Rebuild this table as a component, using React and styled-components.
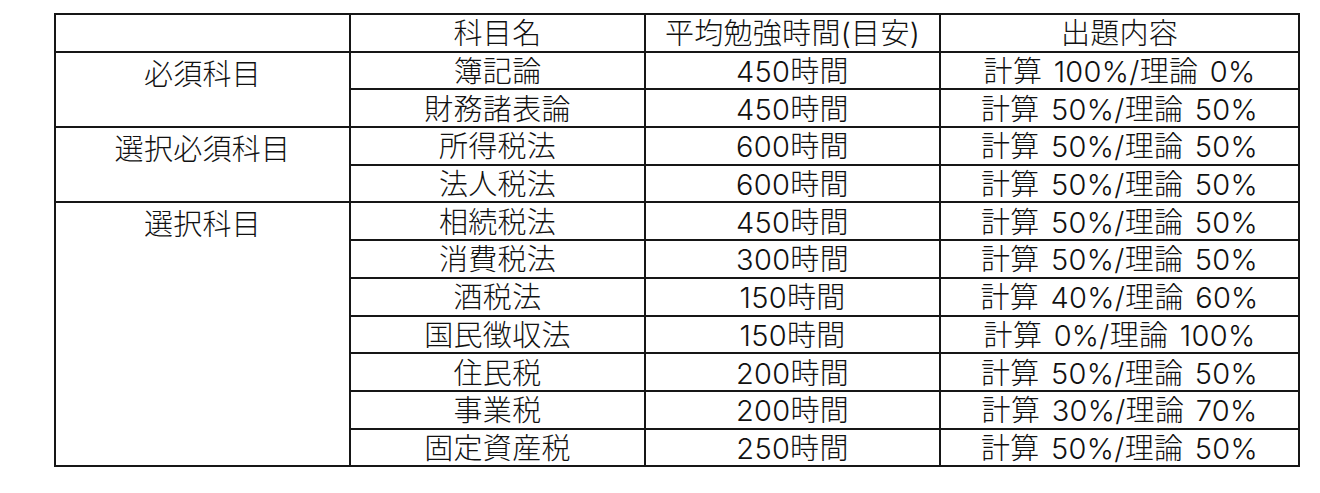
import React from "react";
import styled, { createGlobalStyle } from "styled-components";

const GlobalStyle = createGlobalStyle`
    html, body {
        margin: 0;
        padding: 0;
        background: #fff;
    }
    body {
        font-family: Inter, "Noto Sans CJK JP", sans-serif;
        color: #111;
    }
`;

const Page = styled.div`
    padding: 13px 0 0 54px;
`;

const Table = styled.table`
    border-collapse: collapse;
    table-layout: fixed;
    width: 1244px;
    font-size: 29px;
    font-weight: 300;
    line-height: 1;
    letter-spacing: 0.3px;
    word-spacing: 3px;
    th, td {
        border: 2px solid #161616;
        text-align: center;
        font-weight: 300;
        padding: 0;
        height: 35.7px;
        vertical-align: middle;
    }
`;

const GroupCell = styled.td`
    && {
        vertical-align: top;
        padding-top: 7px;
    }
`;

const Text = styled.span`
    display: inline-block;
    transform: translateY(1px);
`;

const rows = [
    {
        group: "必須科目",
        items: [
            ["簿記論", "450時間", "計算 100%/理論 0%"],
            ["財務諸表論", "450時間", "計算 50%/理論 50%"],
        ],
    },
    {
        group: "選択必須科目",
        items: [
            ["所得税法", "600時間", "計算 50%/理論 50%"],
            ["法人税法", "600時間", "計算 50%/理論 50%"],
        ],
    },
    {
        group: "選択科目",
        items: [
            ["相続税法", "450時間", "計算 50%/理論 50%"],
            ["消費税法", "300時間", "計算 50%/理論 50%"],
            ["酒税法", "150時間", "計算 40%/理論 60%"],
            ["国民徴収法", "150時間", "計算 0%/理論 100%"],
            ["住民税", "200時間", "計算 50%/理論 50%"],
            ["事業税", "200時間", "計算 30%/理論 70%"],
            ["固定資産税", "250時間", "計算 50%/理論 50%"],
        ],
    },
];

const App = () => {
    return (
        <Page>
            <GlobalStyle />
            <Table>
                <colgroup>
                    <col style={{ width: "295px" }} />
                    <col style={{ width: "295px" }} />
                    <col style={{ width: "295px" }} />
                    <col style={{ width: "359px" }} />
                </colgroup>
                <thead>
                    <tr>
                        <th></th>
                        <th><Text>科目名</Text></th>
                        <th><Text>平均勉強時間(目安)</Text></th>
                        <th><Text>出題内容</Text></th>
                    </tr>
                </thead>
                <tbody>
                    {rows.map((g) =>
                        g.items.map((item, i) => (
                            <tr key={g.group + item[0]}>
                                {i === 0 && (
                                    <GroupCell rowSpan={g.items.length}>{g.group}</GroupCell>
                                )}
                                <td><Text>{item[0]}</Text></td>
                                <td><Text>{item[1]}</Text></td>
                                <td><Text>{item[2]}</Text></td>
                            </tr>
                        ))
                    )}
                </tbody>
            </Table>
        </Page>
    );
};

export default App;
